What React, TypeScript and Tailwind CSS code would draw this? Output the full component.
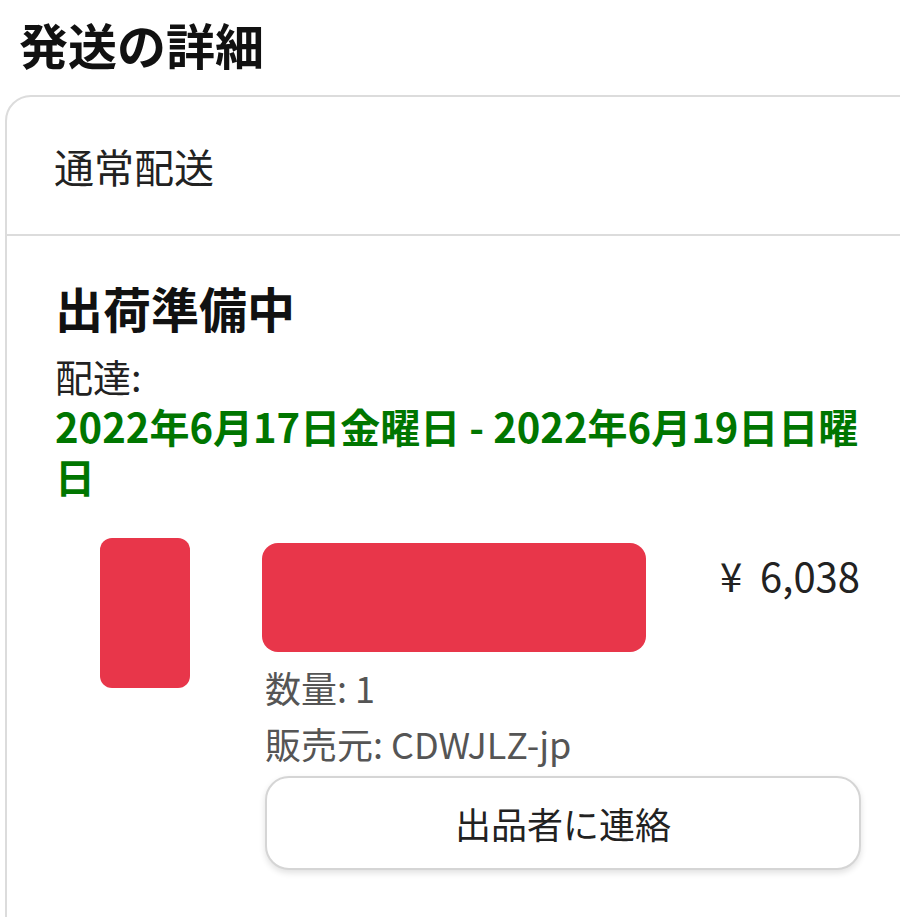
import React from 'react';

const FONT = "font-['Noto_Sans_CJK_JP',_'Noto_Sans',_sans-serif]";

export default function App() {
  return (
    <div className={`w-[900px] h-[917px] overflow-hidden bg-white text-[#111] ${FONT}`}>
      {/* Page title */}
      <h1 className="pl-[19px] pt-[15px] text-[49px] leading-[58px] font-bold">発送の詳細</h1>

      {/* Shipment card (runs past the right and bottom edges) */}
      <div className="mt-[22px] ml-[5px] w-[940px] rounded-tl-[26px] border-2 border-[#dcdcdc] pb-[120px]">
        <div className="h-[139px] flex items-center pl-[47px] border-b-2 border-[#dcdcdc]">
          <span className="text-[40px] leading-[48px] text-[#222]">通常配送</span>
        </div>

        <div className="pl-[48px] pr-[80px] pt-[42px]">
          <h2 className="text-[48px] leading-[58px] font-bold">出荷準備中</h2>
          <p className="mt-[17px] text-[38px] leading-[46px] text-[#222]">配達:</p>
          <p className="mt-[2px] text-[40px] leading-[50px] font-bold text-[#007600] w-[815px]">
            2022年6月17日金曜日 - 2022年6月19日日曜日
          </p>

          {/* Item row */}
          <div className="mt-[28px] flex">
            <div className="w-[210px] pl-[45px] shrink-0">
              <div className="mt-[9px] w-[90px] h-[150px] bg-[#e8364a] rounded-[12px]" />
            </div>
            <div className="flex-1">
              <div className="flex justify-between">
                <div className="mt-[14px] ml-[-3px] w-[384px] h-[109px] bg-[#e8364a] rounded-[16px]" />
                <span className="mt-[24px] mr-[3px] text-[40px] leading-[44px] text-[#222]">
                  ¥<span className="ml-[18px]">6,038</span>
                </span>
              </div>
              <p className="mt-[7px] text-[36px] leading-[56px] text-[#555]">数量: 1</p>
              <p className="text-[36px] leading-[56px] text-[#555]">販売元: CDWJLZ-jp</p>
              <button className="mt-[5px] w-[596px] h-[94px] rounded-[24px] border-2 border-[#d5d5d5] bg-white shadow-[0_3px_6px_rgba(0,0,0,0.12)] text-[36px] text-[#222] flex items-center justify-center">
                出品者に連絡
              </button>
            </div>
          </div>
        </div>
      </div>
    </div>
  );
}
